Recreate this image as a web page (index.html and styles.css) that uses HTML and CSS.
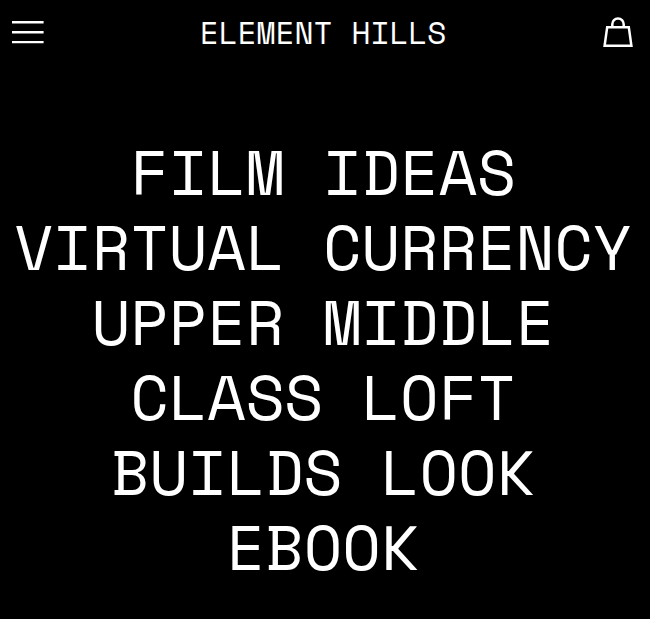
FILE: index.html
```html
<!DOCTYPE html>
<html lang="en">
  <head>
    <meta charset="UTF-8" />
    <meta name="viewport" content="width=device-width, initial-scale=1.0" />
    <title>Element Hills</title>
    <link rel="stylesheet" href="styles.css">
  </head>
  <body>
    <header class="site-header">
      <button type="button" class="icon-button" aria-label="Menu">
        <svg width="32" height="24" viewBox="0 0 32 24" fill="none" stroke="currentColor" stroke-width="2.4">
          <path d="M0 2.3h31.6M0 12.3h31.6M0 22.1h31.6" />
        </svg>
      </button>
      <a href="#" class="site-title">ELEMENT HILLS</a>
      <a href="#" class="icon-button" aria-label="Cart">
        <svg width="32" height="32" viewBox="0 0 32 32" fill="none" stroke="currentColor" stroke-width="2.5">
          <path d="M5.2 11.2h21.6l2.6 18.6H2.6z" />
          <path d="M10.3 11V8.2a5.7 5.7 0 0 1 11.4 0V11" />
        </svg>
      </a>
    </header>
    <main class="hero">
      <h1 class="hero-title">FILM IDEAS VIRTUAL CURRENCY UPPER MIDDLE CLASS LOFT BUILDS LOOK EBOOK</h1>
    </main>
  </body>
</html>
```

FILE: styles.css
```css
body {
  margin: 0;
  background-color: #000;
  color: #fff;
  font-family: "Space Mono", "Liberation Mono", monospace;
}

.site-header {
  display: flex;
  justify-content: space-between;
  align-items: center;
  height: 64px;
  padding: 0 16px 0 12px;
}

.icon-button {
  display: flex;
  padding: 0;
  border: none;
  background: none;
  color: inherit;
  cursor: pointer;
}

.site-title {
  color: inherit;
  font-size: 31px;
  text-decoration: none;
}

.hero {
  padding: 70px 16px 32px 12px;
}

.hero-title {
  margin: 0;
  font-size: 63px;
  font-weight: 400;
  line-height: 75px;
  text-align: center;
}
```
